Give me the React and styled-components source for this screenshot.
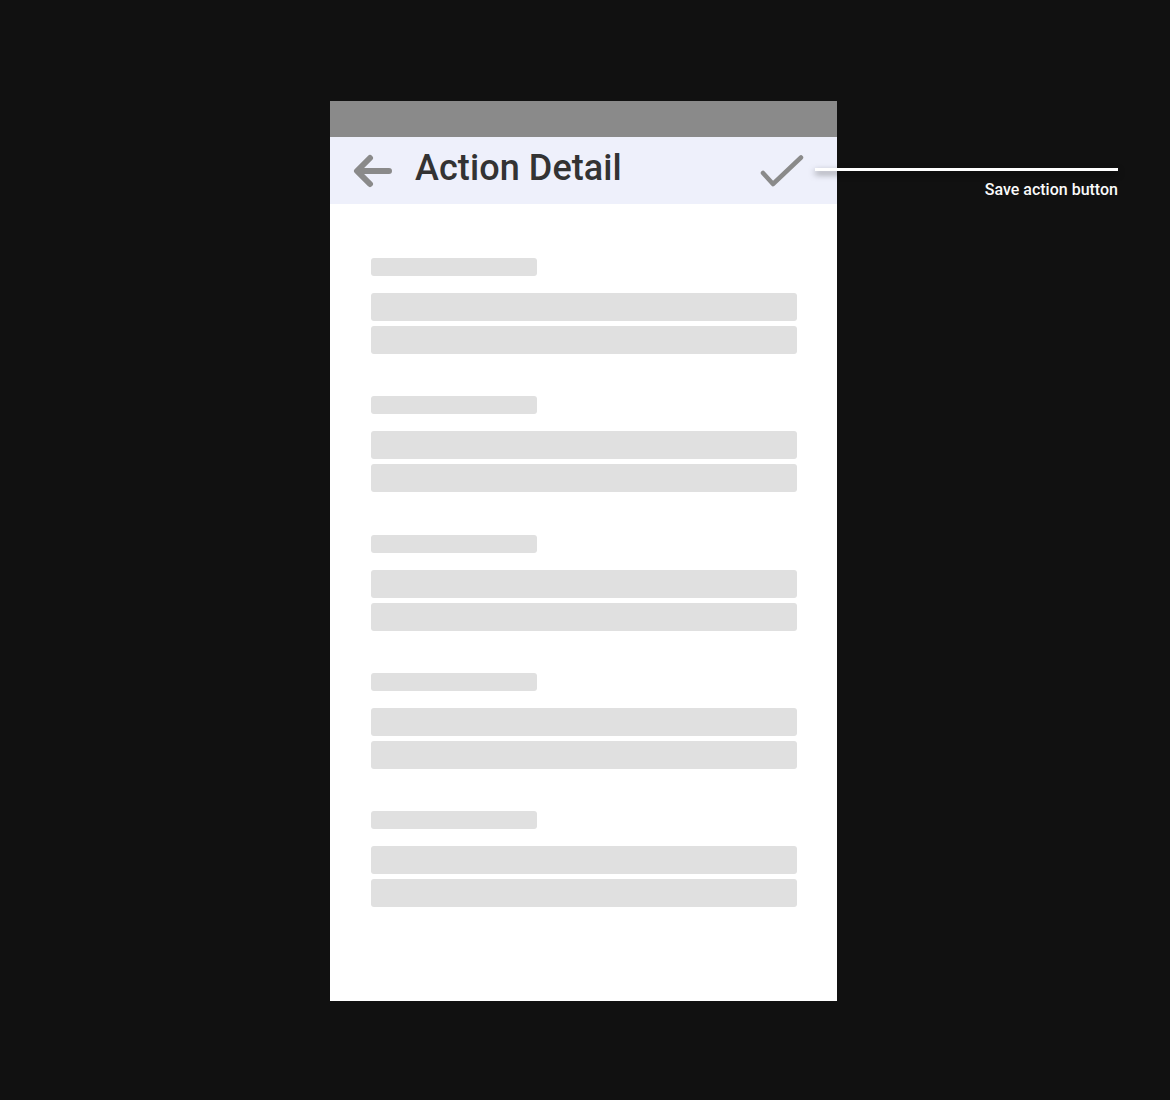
import styled, { createGlobalStyle } from "styled-components"

const GlobalStyle = createGlobalStyle`
  html, body {
    margin: 0;
    padding: 0;
    background: #111111;
  }
`

const groups = [1, 2, 3, 4, 5]

export default function App() {
  return (
    <Page>
      <GlobalStyle />
      <Phone>
        <StatusBar />
        <Header>
          <BackIcon viewBox="0 0 40 34" fill="none">
            <path d="M17 4L4 17L17 30M5 17H36" stroke="#8a8a8a" strokeWidth="6" strokeLinecap="round" strokeLinejoin="round" />
          </BackIcon>
          <Title>Action Detail</Title>
          <CheckIcon viewBox="0 0 46 36" fill="none">
            <path d="M5 20L15 31L43 4.5" stroke="#8a8a8a" strokeWidth="4.5" strokeLinecap="round" strokeLinejoin="round" />
          </CheckIcon>
        </Header>
        <Content>
          {groups.map((id) => (
            <Group key={id}>
              <Label />
              <Rows>
                <Row />
                <Row />
              </Rows>
            </Group>
          ))}
        </Content>
        <Callout>
          <CalloutLine />
          <CalloutText>Save action button</CalloutText>
        </Callout>
      </Phone>
    </Page>
  )
}

const Page = styled.div`
  min-height: 1100px;
  box-sizing: border-box;
  padding: 101px 0 0 330px;
  background: #111111;
  font-family: Roboto, "Liberation Sans", sans-serif;
`
const Phone = styled.div`
  position: relative;
  width: 507px;
  height: 900px;
  background: #ffffff;
`
const StatusBar = styled.div`
  height: 36px;
  background: #8a8a8a;
`
const Header = styled.header`
  display: flex;
  align-items: center;
  height: 66px;
  padding: 0 33px 1px 23px;
  background: #eef0fb;
`
const BackIcon = styled.svg`
  width: 40px;
  height: 34px;
  margin-top: 2px;
`
const Title = styled.h1`
  flex: 1;
  margin: 0 0 5px 22px;
  color: #333333;
  font-size: 36px;
  font-weight: 500;
  line-height: 42px;
  letter-spacing: 0.08px;
`
const CheckIcon = styled.svg`
  width: 46px;
  height: 36px;
  margin-top: 2px;
`
const Content = styled.main`
  display: flex;
  flex-direction: column;
  gap: 42.25px;
  padding: 54px 40px 0 41px;
`
const Group = styled.section`
  display: flex;
  flex-direction: column;
  gap: 17px;
`
const Label = styled.div`
  width: 166px;
  height: 18px;
  border-radius: 3px;
  background: #e0e0e0;
`
const Rows = styled.div`
  display: flex;
  flex-direction: column;
  gap: 5px;
`
const Row = styled.div`
  height: 28px;
  border-radius: 3px;
  background: #e0e0e0;
`
const Callout = styled.div`
  position: absolute;
  top: 67px;
  left: 485px;
  width: 303px;
  display: flex;
  flex-direction: column;
  align-items: flex-end;
`
const CalloutLine = styled.div`
  width: 100%;
  height: 3px;
  background: #ffffff;
  box-shadow: 0 3px 6px rgba(0, 0, 0, 0.5);
`
const CalloutText = styled.span`
  margin-top: 9px;
  color: #fafafa;
  font-size: 16px;
  font-weight: 500;
  line-height: 19px;
`
